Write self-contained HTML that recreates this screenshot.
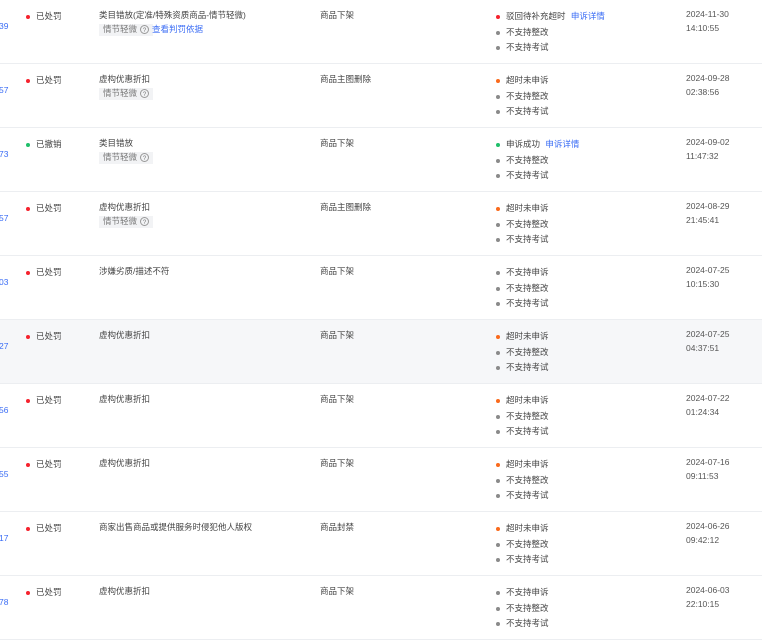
<!DOCTYPE html><html><head><meta charset="utf-8"><style>
body{margin:0;width:762px;height:623px;overflow:hidden;background:#fff;font-family:"Liberation Sans","Noto Sans CJK SC",sans-serif;font-size:8.5px;color:#444;position:relative}
.r{position:absolute;left:0;width:762px;height:63px;border-bottom:1px solid #eceef1}
.r div,.r span{position:absolute;white-space:nowrap;line-height:11px}
.id{left:-1px;top:21px;color:#3b6df5}
.d{width:4px;height:4px;border-radius:50%;display:inline-block}
.tag{left:99px;top:24px;background:#f2f3f5;color:#777;padding:0 4px;height:12px}
.q{display:inline-block;width:7px;height:7px;border:1px solid #999;border-radius:50%;font-size:6px;line-height:7px;text-align:center;margin-left:3px;vertical-align:0}
.b{color:#3b6df5}
</style></head><body>
<script>
const R="#f5222d",O="#fa6a1c",G="#1fbf6a",Y="#8a8a8a";
const rows=[
["39","已处罚",R,"类目错放(定准/特殊资质商品-情节轻微)",1,1,"商品下架","驳回待补充超时",R,1,"2024-11-30","14:10:55"],
["57","已处罚",R,"虚构优惠折扣",1,0,"商品主图删除","超时未申诉",O,0,"2024-09-28","02:38:56"],
["73","已撤销",G,"类目错放",1,0,"商品下架","申诉成功",G,1,"2024-09-02","11:47:32"],
["57","已处罚",R,"虚构优惠折扣",1,0,"商品主图删除","超时未申诉",O,0,"2024-08-29","21:45:41"],
["03","已处罚",R,"涉嫌劣质/描述不符",0,0,"商品下架","不支持申诉",Y,0,"2024-07-25","10:15:30"],
["27","已处罚",R,"虚构优惠折扣",0,0,"商品下架","超时未申诉",O,0,"2024-07-25","04:37:51"],
["56","已处罚",R,"虚构优惠折扣",0,0,"商品下架","超时未申诉",O,0,"2024-07-22","01:24:34"],
["55","已处罚",R,"虚构优惠折扣",0,0,"商品下架","超时未申诉",O,0,"2024-07-16","09:11:53"],
["17","已处罚",R,"商家出售商品或提供服务时侵犯他人版权",0,0,"商品封禁","超时未申诉",O,0,"2024-06-26","09:42:12"],
["78","已处罚",R,"虚构优惠折扣",0,0,"商品下架","不支持申诉",Y,0,"2024-06-03","22:10:15"]];
let h="";
rows.forEach((r,i)=>{
h+=`<div class="r" style="top:${i*64}px;${i==5?'background:#f6f7f9;':''}">
<div class="id">${r[0]}</div>
<div style="left:26px;top:11px"><span class="d" style="position:static;background:${r[2]};margin-right:6px"></span>${r[1]}</div>
<div style="left:99px;top:10px">${r[3]}</div>
${r[4]?`<div class="tag">情节轻微<span class="q" style="position:static">?</span></div>`:''}
${r[5]?`<div class="b" style="left:152px;top:24px">查看判罚依据</div>`:''}
<div style="left:320px;top:10px">${r[6]}</div>
<div style="left:496px;top:11px"><span class="d" style="position:static;background:${r[8]};margin-right:6px"></span>${r[7]}${r[9]?' <span class="b" style="position:static;margin-left:3px">申诉详情</span>':''}</div>
<div style="left:496px;top:27px"><span class="d" style="position:static;background:${Y};margin-right:6px"></span>不支持整改</div>
<div style="left:496px;top:42px"><span class="d" style="position:static;background:${Y};margin-right:6px"></span>不支持考试</div>
<div style="left:686px;top:7px;color:#555;line-height:14px">${r[10]}<br>${r[11]}</div>
</div>`});
document.write(h);
</script>
</body></html>
